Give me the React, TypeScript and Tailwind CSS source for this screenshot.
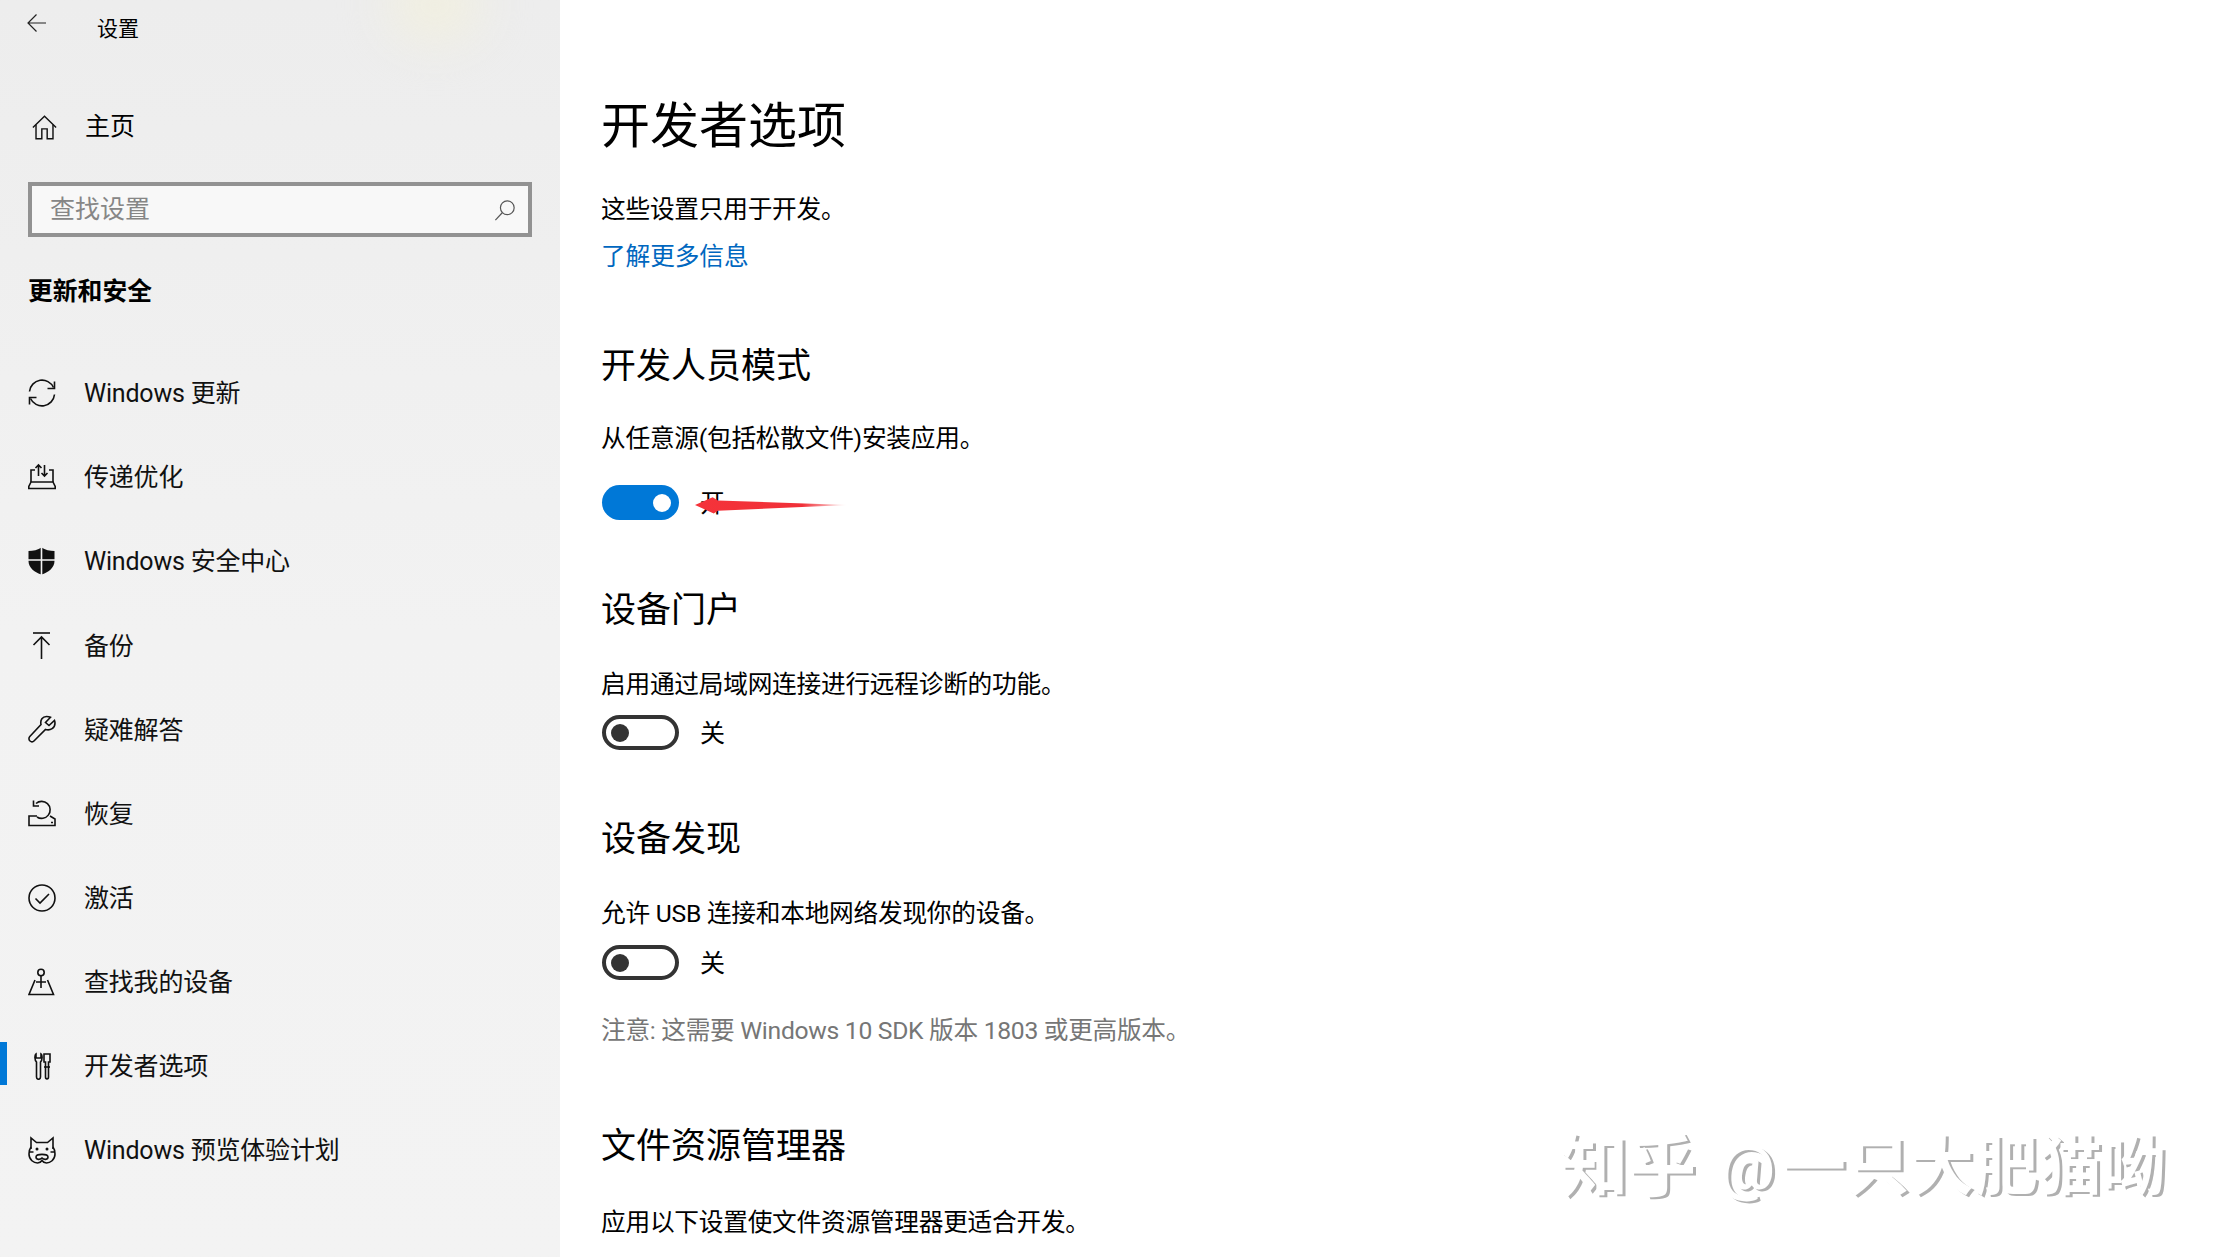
import type { ReactNode } from 'react'

const font = 'font-["Roboto","Noto_Sans_CJK_SC",sans-serif]'

function Icon({ children, className = 'w-7 h-7' }: { children: ReactNode; className?: string }) {
  return (
    <svg viewBox="0 0 28 28" fill="none" stroke="#111" strokeWidth="1.6" className={`${className} shrink-0`}>
      {children}
    </svg>
  )
}

const navItems: { label: string; icon: ReactNode; active?: boolean }[] = [
  {
    label: 'Windows 更新',
    icon: (
      <>
        <path d="M1.5 12.5A12.6 12.6 0 0 1 25.5 8.5" />
        <path d="M26.5 2.5V9.5H19.5" />
        <path d="M26.5 15.5A12.6 12.6 0 0 1 2.5 19.5" />
        <path d="M1.5 25.5V18.5H8.5" />
      </>
    ),
  },
  {
    label: '传递优化',
    icon: (
      <>
        <path d="M3 19V7H7M21 7H25V19" />
        <path d="M3 19L0.8 23.5V25.5H27.2V23.5L25 19Z" />
        <path d="M10.5 13V2M7.5 5L10.5 2L13.5 5M16.5 2V13M13.5 10L16.5 13L19.5 10" />
      </>
    ),
  },
  {
    label: 'Windows 安全中心',
    icon: (
      <>
        <path
          d="M13.5 0.5C10 3 5 4 0.5 4V14C0.5 21 7 25.5 13.5 27.5C20 25.5 26.5 21 26.5 14V4C22 4 17 3 13.5 0.5Z"
          fill="#111"
          stroke="none"
        />
        <path d="M13.5 0V28M0 13H27" stroke="#f3f3f3" strokeWidth="1.6" />
      </>
    ),
  },
  {
    label: '备份',
    icon: (
      <>
        <path d="M5 2H22" />
        <path d="M13.5 6V28M5.5 14L13.5 6L21.5 14" />
      </>
    ),
  },
  {
    label: '疑难解答',
    icon: (
      <path d="M18.5 1.5C14.5 1.5 12 5 13 9.5L1.8 21.5C0.5 23 0.8 25 2 26C3.5 27.3 5 27 6.2 25.7L17.5 14.5C22.5 16 27 13 27 8C27 7 26.8 6.3 26.5 5.5L21 10.5L17.5 7.5L22.5 2.3C21.5 1.8 20 1.5 18.5 1.5Z" />
    ),
  },
  {
    label: '恢复',
    icon: (
      <>
        <path d="M8 3.5A8.5 8.5 0 1 1 9 17" />
        <path d="M5.5 0.5V6H11" />
        <path d="M9 16H1V25.5H27V19L22 16" />
        <path d="M23 22.5H25" />
      </>
    ),
  },
  {
    label: '激活',
    icon: (
      <>
        <circle cx="14" cy="14" r="13" />
        <path d="M7.5 14.5L12 19L21 10" />
      </>
    ),
  },
  {
    label: '查找我的设备',
    icon: (
      <>
        <circle cx="13" cy="4.5" r="3.2" />
        <path d="M13 8V20M8 14H18" />
        <path d="M7 12L1 26.5H25.5L19.5 12" />
      </>
    ),
  },
  {
    label: '开发者选项',
    active: true,
    icon: (
      <>
        <path d="M8 2C6.5 3 6.5 8 8.5 10V25C8.5 28 12.5 28 12.5 25V10C14.5 8 14.5 3 13 2V6H8Z" />
        <path d="M16 2H22V10H20.5V25C20.5 27.5 17.5 27.5 17.5 25V10H16Z" />
        <path d="M16 15H22" />
      </>
    ),
  },
  {
    label: 'Windows 预览体验计划',
    icon: (
      <>
        <path d="M3 13V2L8.5 6.5H19.5L25 2V13" />
        <path d="M3 11C1.5 13 1 15 1 18C1 24 6 27 9.5 27C11.5 27 13 26 14 24.5C15 26 16.5 27 18.5 27C22 27 27 24 27 18C27 15 26.5 13 25 11" />
        <circle cx="9" cy="13" r="1.5" fill="#111" stroke="none" />
        <circle cx="19" cy="13" r="1.5" fill="#111" stroke="none" />
        <path d="M1 16H5.5M22.5 16H27M8 21C8 17.5 20 17.5 20 21C20 24 16 24 14 22C12 24 8 24 8 21Z" />
      </>
    ),
  },
]

function Toggle({ on, label, className = '' }: { on?: boolean; label: string; className?: string }) {
  return (
    <div className={`relative flex items-center h-[35px] ${className}`}>
      {on ? (
        <div className="w-[77px] h-[35px] rounded-full bg-[#0078d7] flex items-center justify-end pr-[8px]">
          <div className="w-[18px] h-[18px] rounded-full bg-white" />
        </div>
      ) : (
        <div className="w-[77px] h-[35px] rounded-full border-[4px] border-[#333333] flex items-center pl-[5px]">
          <div className="w-[18px] h-[18px] rounded-full bg-[#333333]" />
        </div>
      )}
      <span className="ml-[21px] mt-[2px] text-[25px] leading-[36px] text-black">{label}</span>
      {on && (
        <svg viewBox="0 0 147 16" preserveAspectRatio="none" className="absolute left-[93px] top-[11px] w-[153px] h-[18px]">
          <defs>
            <linearGradient id="arrowFade" x1="0" x2="1" y1="0" y2="0">
              <stop offset="0" stopColor="#f5333a" />
              <stop offset="0.7" stopColor="#f03038" />
              <stop offset="1" stopColor="#f03038" stopOpacity="0" />
            </linearGradient>
          </defs>
          <path d="M0 8L17 1L22 4L147 8L22 13L18 15.5Z" fill="url(#arrowFade)" />
        </svg>
      )}
    </div>
  )
}

function Heading({ children, className }: { children: ReactNode; className: string }) {
  return <h2 className={`-ml-[1px] text-[35px] leading-[50px] text-black ${className}`}>{children}</h2>
}

function Para({ children, className }: { children: ReactNode; className: string }) {
  return <p className={`-ml-[1px] text-[24.7px] tracking-[-0.25px] leading-[36px] text-black ${className}`}>{children}</p>
}

export default function App() {
  return (
    <div className={`relative flex w-[2225px] h-[1257px] overflow-hidden bg-white ${font}`}>
      <aside className="relative w-[560px] shrink-0 overflow-hidden bg-gradient-to-b from-[#ededed] via-[#f2f2f2] to-[#f3f3f3]">
        <div className="absolute left-[390px] -top-[30px] w-[90px] h-[70px] rounded-full bg-[#f1efe0] blur-xl" />
        <div className="relative flex items-center h-[50px] pl-[27px] text-[21px] text-black">
          <svg viewBox="0 0 20 20" fill="none" stroke="#222" strokeWidth="1.2" className="w-[20px] h-[20px] -mt-[4px]">
            <path d="M19 10H1M9.5 1.5L1 10L9.5 18.5" />
          </svg>
          <span className="ml-[50px] mt-[10px]">设置</span>
        </div>
        <div className="relative flex items-center h-[50px] mt-[52px] pl-[32px] text-[25px] text-black">
          <Icon className="w-[25px] h-[25px]">
            <path d="M1 14L14 1.5L27 14" />
            <path d="M4.5 11V26.5H11V15.5H17V26.5H23.5V11" />
          </Icon>
          <span className="ml-[28px]">主页</span>
        </div>
        <div className="relative flex items-center justify-between h-[55px] mt-[30px] ml-[28px] w-[504px] border-[4px] border-[#929292] bg-[#f8f8f8] pl-[18px] pr-[12px] text-[25px] text-[#868686]">
          <span>查找设置</span>
          <svg viewBox="0 0 24 24" fill="none" stroke="#555" strokeWidth="1.3" className="w-[22px] h-[22px]">
            <circle cx="14.5" cy="9.5" r="7.5" />
            <path d="M9 15L1.5 23" />
          </svg>
        </div>
        <div className="relative h-[36px] mt-[37px] ml-[28px] text-[24.8px] leading-[36px] font-bold text-black">更新和安全</div>
        <nav className="mt-[41px]">
          {navItems.map((item) => (
            <div key={item.label} className="relative flex items-center h-[84.1px] pl-[28px] text-[25px] tracking-[-0.2px] text-[#111]">
              {item.active && <div className="absolute left-0 top-[18px] w-[7px] h-[43px] bg-[#0078d7]" />}
              <Icon>{item.icon}</Icon>
              <span className="ml-[28px] mt-[2px]">{item.label}</span>
            </div>
          ))}
        </nav>
      </aside>

      <main className="flex-1 pl-[42px] pt-[97px]">
        <h1 className="-ml-[1px] text-[49px] leading-[60px] text-black">开发者选项</h1>
        <Para className="mt-[35px]">这些设置只用于开发。</Para>
        <p className="-ml-[1px] mt-[11px] text-[24.7px] tracking-[-0.1px] leading-[36px] text-[#0067c0]">了解更多信息</p>

        <Heading className="mt-[67px]">开发人员模式</Heading>
        <Para className="mt-[29px]">从任意源(包括松散文件)安装应用。</Para>
        <Toggle on label="开" className="mt-[28px]" />

        <Heading className="mt-[66px]">设备门户</Heading>
        <Para className="mt-[31px]">启用通过局域网连接进行远程诊断的功能。</Para>
        <Toggle label="关" className="mt-[12px]" />

        <Heading className="mt-[65px]">设备发现</Heading>
        <Para className="mt-[31px]">允许 USB 连接和本地网络发现你的设备。</Para>
        <Toggle label="关" className="mt-[13px]" />
        <p className="-ml-[1px] mt-[33px] text-[24.7px] tracking-[-0.3px] leading-[36px] text-[#767676]">注意: 这需要 Windows 10 SDK 版本 1803 或更高版本。</p>

        <Heading className="mt-[73px]">文件资源管理器</Heading>
        <Para className="mt-[33px]">应用以下设置使文件资源管理器更适合开发。</Para>
      </main>

      <div className="absolute left-[1560px] top-[1128px] flex items-center whitespace-pre leading-[80px] font-bold text-white [text-shadow:3px_2px_0_#b0b0b0]">
        <span className="text-[68px]">知乎</span>
        <span className="ml-[24px] text-[61px]">@</span>
        <span className="ml-[7px] text-[64px]">一只大肥猫呦</span>
      </div>
    </div>
  )
}
